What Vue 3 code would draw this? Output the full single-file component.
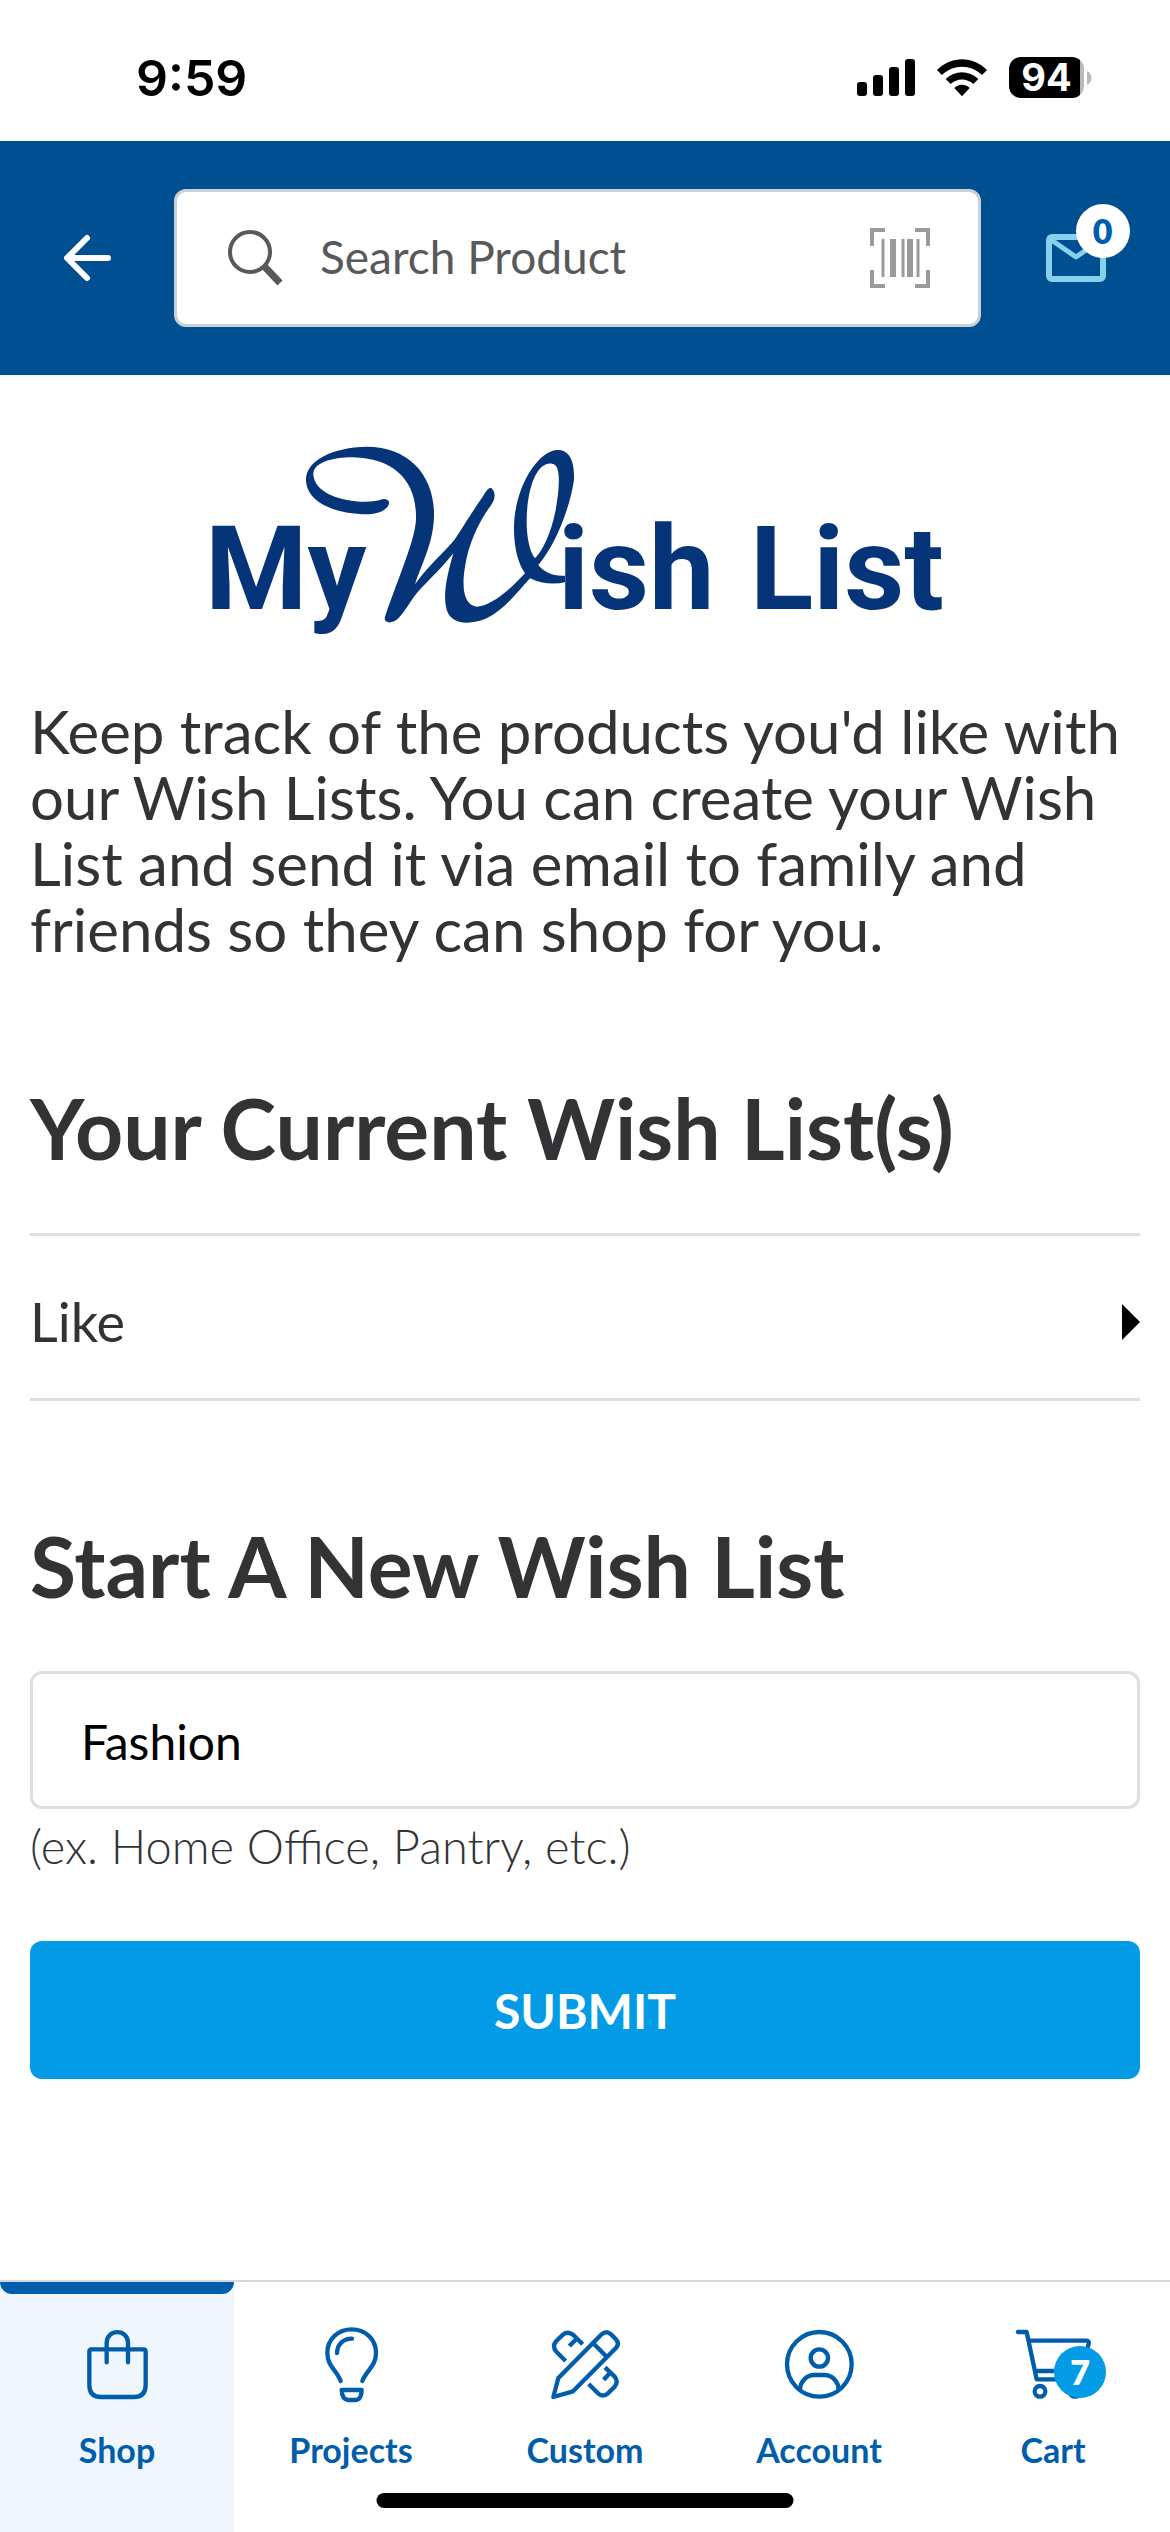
<script setup>
import { ref } from 'vue'

const query = ref('')
const listName = ref('Fashion')
const wishLists = ['Like']
const tabs = [
  { id: 'shop', label: 'Shop' },
  { id: 'projects', label: 'Projects' },
  { id: 'custom', label: 'Custom' },
  { id: 'account', label: 'Account' },
  { id: 'cart', label: 'Cart', badge: 7 },
]
const active = ref('shop')
</script>

<template>
  <div class="app">
    <div class="status">
      <span class="time">9:59</span>
      <div class="indicators">
        <svg width="58" height="38" viewBox="0 0 58 38" aria-hidden="true">
          <rect x="0" y="23" width="10" height="14" rx="3" />
          <rect x="16" y="16" width="10" height="21" rx="3" />
          <rect x="32" y="8" width="10" height="29" rx="3" />
          <rect x="48" y="0" width="10" height="37" rx="3" />
        </svg>
        <svg width="50" height="38" viewBox="349 86 150 114" aria-hidden="true">
          <path d="M349 119C392 76 456 76 499 119L484 134C450 101 398 101 364 134Z" />
          <path d="M375 146C403 119 445 119 473 146L458 161C439 143 409 143 390 161Z" />
          <path d="M401 173C414 160 434 160 447 173L424 198Z" />
        </svg>
        <div class="battery">
          <span class="level">94</span>
          <svg class="cap" width="5" height="14" viewBox="0 0 5 14" aria-hidden="true">
            <path d="M0 0C6 3 6 11 0 14Z" fill="#b9b9b9" />
          </svg>
        </div>
      </div>
    </div>

    <header class="header">
      <button class="icon-btn" type="button" aria-label="Back">
        <svg width="48" height="48" viewBox="0 0 48 48" fill="none" stroke="#fff" stroke-width="6" stroke-linecap="round" stroke-linejoin="round" aria-hidden="true">
          <path d="M24 4L4 24L24 44M5 24H45" />
        </svg>
      </button>
      <form class="search" @submit.prevent>
        <svg width="56" height="56" viewBox="0 0 56 56" fill="none" stroke="#58595b" aria-hidden="true">
          <circle cx="22" cy="22" r="20" stroke-width="4" />
          <path d="M36 36L52 53" stroke-width="7" />
        </svg>
        <input v-model="query" class="search-input" type="search" placeholder="Search Product" aria-label="Search Product" />
        <button class="scan" type="button" aria-label="Scan barcode">
          <svg width="60" height="60" viewBox="0 0 60 60" fill="none" stroke="#9b9b9b" stroke-width="4" aria-hidden="true">
            <path d="M2 18V2H15M45 2H58V18M58 42V58H45M15 58H2V42" />
            <path d="M13 11V49M33 11V49M48 11V49" stroke-width="3" />
            <path d="M23 11V49M40 11V49" stroke-width="6" />
          </svg>
        </button>
      </form>
      <button class="icon-btn" type="button" aria-label="Messages">
        <span class="anchor">
          <svg width="60" height="48" viewBox="0 0 60 48" fill="none" stroke="#87d1ec" stroke-width="6" stroke-linejoin="round" aria-hidden="true">
            <rect x="3" y="3" width="54" height="42" rx="3" />
            <path d="M4 5L30 23L56 5" stroke-width="5" />
          </svg>
          <span class="badge mail-badge">0</span>
        </span>
      </button>
    </header>

    <main class="content">
      <svg class="logo" viewBox="203 440 764 200" role="img" aria-label="My Wish List" fill="#063479">
        <text class="logo-text" x="205" y="609">My</text>
        <path
          transform="translate(180 420) scale(.33333)"
          fill-rule="evenodd"
          d="M600 240C580 245 560 245 540 245C470 240 405 215 400 165C398 130 450 112 520 112C640 115 708 180 708 290C710 350 660 460 615 590C608 612 640 612 655 595C675 575 690 545 710 520C740 485 785 445 820 400C800 470 790 520 798 560C805 610 860 620 920 595C970 570 1010 520 1050 475C1080 490 1120 495 1155 487V467C1120 470 1090 455 1075 435C1130 370 1170 260 1182 180C1185 110 1160 88 1130 90C1070 95 1000 210 1002 330C1003 390 1015 430 1035 460C990 510 930 560 890 560C850 555 845 500 855 440C865 370 900 300 930 260C950 235 945 215 935 205C925 200 918 215 905 235C880 270 850 320 825 357C800 390 750 430 705 493C725 430 760 370 762 290C765 170 690 80 560 80C460 82 378 120 378 180C380 250 470 282 560 283C600 283 630 265 627 245C622 235 610 235 600 240ZM1065 415C1030 370 1035 240 1060 180C1080 130 1110 125 1125 135C1145 150 1135 230 1125 280C1112 340 1090 390 1065 415Z"
        />
        <text class="logo-text" x="558" y="609">ish</text>
        <text class="logo-text" x="750" y="609">List</text>
      </svg>

      <p class="intro">
        Keep track of the products you'd like with our Wish Lists. You can create your Wish List and send it via email
        to family and friends so they can shop for you.
      </p>

      <section class="lists">
        <h2 class="title">Your Current Wish List(s)</h2>
        <ul class="rows">
          <li v-for="name in wishLists" :key="name">
            <a class="row" href="#">
              <span>{{ name }}</span>
              <svg width="18" height="36" viewBox="0 0 18 36" aria-hidden="true"><path d="M0 0L18 18L0 36Z" /></svg>
            </a>
          </li>
        </ul>
      </section>

      <form class="create" @submit.prevent>
        <h2 class="title"><label for="list-name">Start A New Wish List</label></h2>
        <input id="list-name" v-model="listName" class="field" type="text" aria-describedby="list-hint" />
        <p id="list-hint" class="hint">(ex. Home Office, Pantry, etc.)</p>
        <button class="submit" type="submit">SUBMIT</button>
      </form>
    </main>

    <nav class="tabs">
      <a v-for="tab in tabs" :key="tab.id" class="tab" :class="{ active: tab.id === active }" href="#" @click.prevent="active = tab.id">
        <span class="anchor">
          <svg v-if="tab.id === 'shop'" class="glyph" viewBox="231 192 240 240" aria-hidden="true">
            <path d="M274 268H431Q437 268 437 275V375Q437 411 402 411H302Q268 411 268 375V275Q268 268 274 268Z" />
            <path d="M320 307V248C320 206 384 206 384 248V307" />
          </svg>
          <svg v-else-if="tab.id === 'projects'" class="glyph" viewBox="933 192 240 240" aria-hidden="true">
            <path d="M1022 363C1011 331 982 319 982 279C982 236 1015 208 1055 208C1095 208 1128 236 1128 279C1128 319 1099 331 1087 363" />
            <path d="M1011 279C1012 252 1031 236 1056 236" />
            <path d="M1025 390H1085Q1084 420 1066 420H1044Q1026 418 1025 390Z" />
          </svg>
          <svg v-else-if="tab.id === 'custom'" class="glyph flat" viewBox="255 192 240 240" aria-hidden="true">
            <path d="M280 411L295 354L425 223Q439 210 453 223L467 237Q480 251 467 265L339 394Z" />
            <path d="M399 249L440 290" />
            <path d="M317 303L289 275Q275 259 289 243L309 224Q324 212 340 225L368 253M347 239L328 258" />
            <path d="M386 372L414 400Q429 413 444 400L464 380Q476 365 464 350L435 322M450 339L431 359" />
          </svg>
          <svg v-else-if="tab.id === 'account'" class="glyph" viewBox="957 192 240 240" aria-hidden="true">
            <circle cx="1078" cy="313" r="97" />
            <circle cx="1078" cy="294" r="26" />
            <path d="M1020 388C1022 362 1042 345 1062 345H1094C1114 345 1134 362 1136 388" />
          </svg>
          <svg v-else class="glyph" viewBox="459 192 240 240" aria-hidden="true">
            <path d="M474 216H500L530 358H660M510 242H680Q688 243 686 251L666 333H528" />
            <circle cx="540" cy="394" r="16" />
            <circle cx="645" cy="394" r="16" />
          </svg>
          <span v-if="tab.badge" class="badge cart-badge">{{ tab.badge }}</span>
        </span>
        <span>{{ tab.label }}</span>
      </a>
      <span class="home-bar"></span>
    </nav>
  </div>
</template>

<style>
body {
  margin: 0;
  background: #fff;
}
</style>

<style scoped>
.app {
  display: flex;
  flex-direction: column;
  min-height: 100vh;
  color: #333336;
  font-family: Lato, "Open Sans", sans-serif;
}

button,
input {
  margin: 0;
  padding: 0;
  border: 0;
  background: none;
  font: inherit;
}

svg {
  display: block;
  flex: none;
}

.status {
  display: flex;
  align-items: center;
  justify-content: space-between;
  height: 141px;
  box-sizing: border-box;
  padding: 14px 78px 0 136px;
  color: #000;
  font-family: Inter, sans-serif;
  font-weight: 600;
}

.time {
  font-size: 50px;
}

.indicators {
  display: flex;
  align-items: center;
  gap: 22px;
}

.battery {
  display: flex;
  align-items: center;
  gap: 3px;
}

.level {
  width: 75px;
  border-radius: 12px;
  background: linear-gradient(to right, #000 71px, #b9b9b9 71px);
  color: #fff;
  font-size: 38px;
  font-weight: 700;
  line-height: 41px;
  text-align: center;
}

.header {
  display: grid;
  grid-template-columns: 174px minmax(0, 1fr) 189px;
  align-items: center;
  height: 234px;
  background: #004f90;
}

.icon-btn {
  display: flex;
  align-items: center;
  justify-content: center;
  height: 100%;
}

.anchor {
  position: relative;
}

.badge {
  position: absolute;
  border-radius: 50%;
  font-weight: 800;
  text-align: center;
}

.mail-badge {
  top: -30px;
  left: 30px;
  width: 54px;
  background: #fff;
  color: #005dab;
  font-size: 34px;
  line-height: 54px;
}

.search {
  display: flex;
  align-items: center;
  height: 138px;
  box-sizing: border-box;
  padding: 0 48px 0 51px;
  border: 3px solid #c8d1d6;
  border-radius: 12px;
  background: #fff;
}

.search-input {
  flex: 1;
  min-width: 0;
  margin-left: 36px;
  padding-bottom: 4px;
  color: #58595b;
  font-size: 46px;
  outline: 0;
}

.search-input::placeholder {
  color: #58595b;
  opacity: 1;
}

.content {
  display: flex;
  flex-direction: column;
  padding: 65px 30px;
}

.logo {
  width: 764px;
  max-width: 100%;
  align-self: center;
}

.logo-text {
  font-family: Roboto, "Liberation Sans", sans-serif;
  font-size: 117px;
  font-weight: 700;
}

.intro {
  margin: 58px 0 0;
  font-size: 60px;
  line-height: 66px;
}

.title {
  margin: 0;
  font-size: 84px;
  font-weight: 700;
  line-height: 96px;
}

.lists {
  margin-top: 118px;
}

.rows {
  margin: 57px 0 0;
  padding: 0;
  border-top: 3px solid #dedede;
  list-style: none;
}

.row {
  display: flex;
  align-items: center;
  justify-content: space-between;
  height: 165px;
  box-sizing: border-box;
  padding-top: 10px;
  border-bottom: 3px solid #dedede;
  color: inherit;
  font-size: 54px;
  line-height: 60px;
  text-decoration: none;
}

.create {
  display: flex;
  flex-direction: column;
  margin-top: 117px;
}

.field {
  height: 138px;
  margin-top: 57px;
  padding: 2px 48px 0;
  box-sizing: border-box;
  border: 3px solid #dedede;
  border-radius: 12px;
  color: #000;
  font-size: 48px;
}

.hint {
  margin: 9px 0 0;
  font-size: 47px;
  font-weight: 300;
  line-height: 56px;
}

.submit {
  height: 138px;
  margin-top: 67px;
  border-radius: 12px;
  background: #039be5;
  color: #fff;
  font-size: 48px;
  font-weight: 700;
}

.tabs {
  position: relative;
  display: grid;
  grid-template-columns: repeat(5, 1fr);
  margin-top: auto;
  border-top: 2px solid #d8d8d8;
}

.tab {
  position: relative;
  display: flex;
  flex-direction: column;
  align-items: center;
  gap: 26px;
  height: 250px;
  padding-top: 42px;
  box-sizing: border-box;
  color: #005dab;
  font-size: 34px;
  font-weight: 700;
  line-height: 40px;
  text-decoration: none;
}

.active {
  background: #eff6fd;
}

.active::before {
  content: "";
  position: absolute;
  top: 0;
  left: 0;
  width: 100%;
  height: 12px;
  border-radius: 0 0 12px 12px;
  background: #005dab;
}

.glyph {
  width: 80px;
  height: 80px;
  fill: none;
  stroke: #005dab;
  stroke-width: 13px;
  stroke-linecap: round;
  stroke-linejoin: round;
}

.flat {
  stroke-linecap: butt;
}

.cart-badge {
  top: 22px;
  left: 41px;
  width: 52px;
  background: #039be5;
  color: #fff;
  font-size: 34px;
  line-height: 52px;
}

.home-bar {
  position: absolute;
  bottom: 24px;
  left: 50%;
  width: 417px;
  height: 15px;
  border-radius: 8px;
  background: #000;
  transform: translateX(-50%);
}
</style>
